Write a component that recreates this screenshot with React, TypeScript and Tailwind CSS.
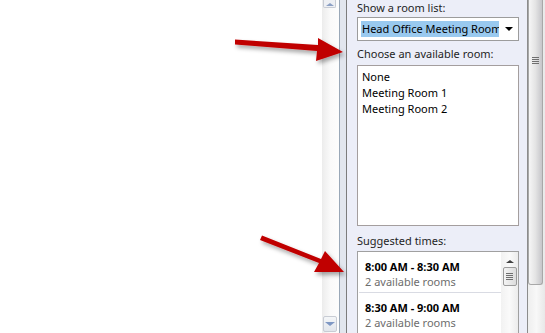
const font = { fontFamily: '"Noto Sans", "Liberation Sans", Arial, sans-serif' };

function Gripper() {
    return (
        <div className="flex flex-col gap-[1px]">
            <div className="h-[1px] w-[7px] bg-[#6f6f6f]" />
            <div className="h-[1px] w-[7px] bg-[#6f6f6f]" />
            <div className="h-[1px] w-[7px] bg-[#6f6f6f]" />
            <div className="h-[1px] w-[7px] bg-[#6f6f6f]" />
        </div>
    );
}

function Arrows() {
    return (
        <svg className="absolute inset-0 pointer-events-none" width="545" height="333" viewBox="0 0 545 333">
            <defs>
                <filter id="shadow" x="-20%" y="-50%" width="140%" height="200%">
                    <feDropShadow dx="2" dy="3" stdDeviation="2" floodColor="#000" floodOpacity="0.35" />
                </filter>
            </defs>
            <g fill="#c00000" filter="url(#shadow)">
                <polygon points="235,39.5 318,45 318,38 343,52 316,61 317,51 235,44.5" />
                <polygon points="262,235.5 321,259 325,251 344,272 314,272 319,263 260,240" />
            </g>
        </svg>
    );
}

export default function App() {
    return (
        <div className="relative flex h-[333px] w-[545px] overflow-hidden bg-white text-[11px]" style={font}>
            {/* blank page area */}
            <div className="w-[322px] bg-white" />

            {/* left scrollbar */}
            <div className="flex w-[17px] flex-col justify-between bg-gradient-to-r from-[#ececec] via-[#fafafa] to-[#fdfdfd] px-[1px]">
                <div className="flex h-[8px] w-[13px] items-end justify-center rounded-b-[2px] border border-t-0 border-[#c8ccd4] bg-[#eef0f4]">
                    <div className="mb-[1px] h-0 w-0 border-x-[4px] border-b-[3px] border-x-transparent border-b-[#8ca0c4]" />
                </div>
                <div className="mb-[1px] flex h-[16px] w-[14px] items-center justify-center rounded-[2px] border border-[#c8ccd4] bg-gradient-to-b from-[#f4f6f8] to-[#e2e6ec]">
                    <div className="h-0 w-0 border-x-[5px] border-t-[4px] border-x-transparent border-t-[#7f98c4]" />
                </div>
            </div>
            <div className="w-[1px] bg-[#9aa8b8]" />
            <div className="w-[6px] bg-[#e2e6ee]" />
            <div className="w-[1px] bg-[#7c7c7c]" />

            {/* side panel */}
            <div className="flex w-[180px] flex-col bg-[#eceef8] pl-[10px] pr-[8px] text-[#1e1e1e]">
                <div className="h-[17px] leading-[16px]">Show a room list:</div>
                <div className="flex h-[24px] items-center border border-[#9c9c9c] bg-white pl-[3px] pr-[5px]">
                    <div className="h-[16px] w-[138px] overflow-hidden whitespace-nowrap bg-[#99c9ef] pl-[1px] leading-[16px] text-black">
                        Head Office Meeting Room
                    </div>
                    <div className="flex flex-1 justify-end">
                        <div className="h-0 w-0 border-x-[4px] border-t-[4px] border-x-transparent border-t-black" />
                    </div>
                </div>
                <div className="h-[24px] pt-[5px] leading-[16px]">Choose an available room:</div>
                <div className="flex h-[161px] flex-col border border-[#a49e9e] bg-white px-[4px] pt-[3px] leading-[16px] text-black">
                    <div>None</div>
                    <div>Meeting Room 1</div>
                    <div>Meeting Room 2</div>
                </div>
                <div className="h-[25px] pt-[7px] leading-[16px]">Suggested times:</div>
                <div className="flex flex-1 border border-b-0 border-[#a0a0a0] bg-white pl-[1px]">
                    <div className="flex flex-1 flex-col">
                        <div className="border-b border-[#d9dbe3] px-[6px] pb-[3px] pt-[7px] leading-[15px]">
                            <div className="font-bold text-black">8:00 AM - 8:30 AM</div>
                            <div className="text-[#6d6d6d]">2 available rooms</div>
                        </div>
                        <div className="px-[6px] pt-[7px] leading-[15px]">
                            <div className="font-bold text-black">8:30 AM - 9:00 AM</div>
                            <div className="text-[#6d6d6d]">2 available rooms</div>
                        </div>
                    </div>
                    <div className="flex w-[17px] flex-col items-center bg-gradient-to-r from-[#f2f2f2] via-[#fafafa] to-[#ececec] pt-[8px]">
                        <div className="h-0 w-0 border-x-[4px] border-b-[3px] border-x-transparent border-b-[#404040]" />
                        <div className="mt-[4px] flex h-[19px] w-[14px] items-center justify-center rounded-[2px] border border-[#9c9c9c] bg-gradient-to-r from-[#f4f4f4] to-[#dcdcdc]">
                            <Gripper />
                        </div>
                    </div>
                </div>
            </div>

            <div className="w-[1px] bg-[#8c8c8c]" />

            {/* right scrollbar */}
            <div className="flex w-[17px] flex-col bg-gradient-to-r from-[#eeeeee] via-[#f8f8f8] to-[#e8e8e8]">
                <div className="flex h-[285px] w-[15px] items-start justify-center rounded-b-[3px] border border-t-0 border-[#a8a8a8] bg-gradient-to-r from-[#f6f6f6] via-[#e4e4e4] to-[#c6c6ca] pt-[57px]">
                    <Gripper />
                </div>
            </div>

            <Arrows />
        </div>
    );
}
